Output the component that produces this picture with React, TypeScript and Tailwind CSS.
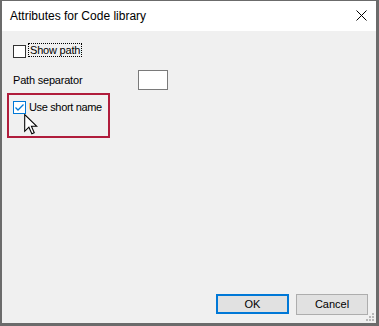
import React from 'react';

const font = { fontFamily: '"Liberation Sans", Arial, sans-serif' };

const Checkbox = ({ checked }: { checked?: boolean }) => (
  <div
    className={`w-[13px] h-[13px] flex-shrink-0 bg-white border ${checked ? 'border-[#0078d7]' : 'border-[#333333]'} flex items-center justify-center`}
  >
    {checked && (
      <svg width="11" height="11" viewBox="0 0 11 11">
        <path d="M1.5 5.5 L4 8 L9.5 2.5" fill="none" stroke="#0078d7" strokeWidth="1.3" />
      </svg>
    )}
  </div>
);

const Cursor = () => (
  <svg width="14" height="21" viewBox="0 0 13 20" className="absolute left-[15px] top-[19px]">
    <path
      d="M0.5 0.5 L0.5 16.5 L4.5 12.6 L7.3 18.8 L9.6 17.8 L6.9 11.7 L12 11.7 Z"
      fill="white"
      stroke="black"
      strokeWidth="1"
      strokeLinejoin="miter"
    />
  </svg>
);

export default function App() {
  return (
    <div
      className="w-[379px] h-[326px] flex flex-col border-l-2 border-t border-r-[3px] border-b-[3px] border-[#6b6b6b] text-black text-[11px] select-none"
      style={font}
    >
      {/* Title bar */}
      <div className="h-[30px] flex-shrink-0 bg-white flex items-center justify-between pl-[8px] pr-[9px]">
        <span className="text-[12px] leading-none pb-[1px]">Attributes for Code library</span>
        <svg width="11" height="11" viewBox="0 0 11 11" className="mb-[1px]">
          <path d="M0.5 0.5 L10.5 10.5 M10.5 0.5 L0.5 10.5" stroke="black" strokeWidth="1" />
        </svg>
      </div>

      {/* Body */}
      <div className="flex-1 bg-[#f0f0f0] flex flex-col relative">
        <div className="flex items-start ml-[11px] mt-[12px] h-[15px]">
          <div className="mt-[2px]">
            <Checkbox />
          </div>
          <span className="ml-[2px] h-[14px] border border-dotted border-black px-[1px] leading-[12px] tracking-[-0.2px]">
            Show path
          </span>
        </div>

        <div className="flex items-center ml-[11px] mt-[12px] h-[20px]">
          <span className="w-[125px] leading-none tracking-[-0.2px]">Path separator</span>
          <div className="w-[30px] h-[20px] bg-white border border-[#7a7a7a]" />
        </div>

        <div className="relative ml-[5px] mt-[3px] w-[103px] h-[45px] border-2 border-[#b01c3c]">
          <div className="flex items-center ml-[4px] mt-[6px]">
            <Checkbox checked />
            <span className="ml-[3px] leading-none tracking-[-0.35px]">Use short name</span>
          </div>
          <Cursor />
        </div>

        <div className="mt-auto flex justify-end gap-[7px] pr-[8px] mb-[8px]">
          <button className="w-[73px] h-[20px] bg-[#e1e1e1] border-2 border-[#0078d7] text-[11px] leading-none">
            OK
          </button>
          <button className="w-[72px] h-[21px] bg-[#e1e1e1] border border-[#adadad] text-[11px] leading-none">
            Cancel
          </button>
        </div>

        <svg width="9" height="9" viewBox="0 0 9 9" className="absolute right-[1px] bottom-[1px]">
          <rect x="6" y="0" width="2" height="2" fill="#b8b8b8" />
          <rect x="3" y="3" width="2" height="2" fill="#b8b8b8" />
          <rect x="6" y="3" width="2" height="2" fill="#b8b8b8" />
          <rect x="0" y="6" width="2" height="2" fill="#b8b8b8" />
          <rect x="3" y="6" width="2" height="2" fill="#b8b8b8" />
          <rect x="6" y="6" width="2" height="2" fill="#b8b8b8" />
        </svg>
      </div>
    </div>
  );
}
